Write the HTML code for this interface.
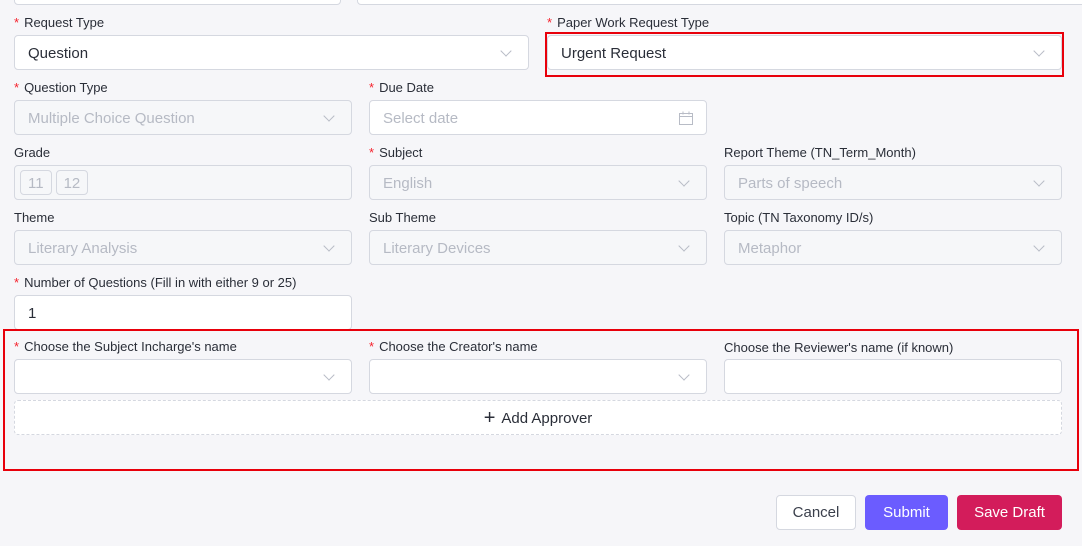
<!DOCTYPE html>
<html><head><style>
body{margin:0;width:1082px;height:546px;background:#f6f6f9;font-family:"Liberation Sans",sans-serif;position:relative;overflow:hidden;color:#1f2330}
.l{position:absolute;font-size:13px;color:#2a2e38;line-height:16px}
.l b{color:#f5222d;font-weight:normal;margin-right:5px;font-size:13px}
.i{position:absolute;box-sizing:border-box;height:35px;border:1px solid #d5d8e0;border-radius:4px;background:#fff;font-size:15px;line-height:36px;padding-left:13px;color:#2a2e38}
.d{background:#f6f7f9;color:#b6bac4}
.p{color:#b6bac4}
.c{position:absolute;right:18px;top:11px;width:7px;height:7px;border-right:1px solid #b8bcc6;border-bottom:1px solid #b8bcc6;transform:rotate(45deg)}
.tag{display:inline-block;border:1px solid #d5d8e0;border-radius:4px;height:25px;line-height:26px;padding:0 7px;margin:4px 0 0 -8px;margin-right:12px;font-size:15px;color:#b6bac4;box-sizing:border-box;vertical-align:top}
.btn{position:absolute;top:495px;height:35px;box-sizing:border-box;border-radius:4px;font-size:15px;line-height:36px;text-align:center}
</style></head><body>
<div class="i" style="left:14px;top:-30px;width:327px"></div>
<div class="i" style="left:357px;top:-30px;width:740px"></div>

<div class="l" style="left:14px;top:15px"><b>*</b>Request Type</div>
<div class="i" style="left:14px;top:35px;width:515px">Question<span class="c"></span></div>
<div class="l" style="left:547px;top:15px"><b>*</b>Paper Work Request Type</div>
<div class="i" style="left:547px;top:35px;width:515px">Urgent Request<span class="c"></span></div>
<div style="position:absolute;left:545px;top:32px;width:515px;height:41px;border:2px solid #e8000b"></div>

<div class="l" style="left:14px;top:80px"><b>*</b>Question Type</div>
<div class="i d" style="left:14px;top:100px;width:338px">Multiple Choice Question<span class="c"></span></div>
<div class="l" style="left:369px;top:80px"><b>*</b>Due Date</div>
<div class="i p" style="left:369px;top:100px;width:338px">Select date
<svg style="position:absolute;right:13px;top:10px" width="14" height="14" viewBox="0 0 14 14" fill="none" stroke="#b8bcc6"><rect x="0.5" y="2.5" width="13" height="11"/><path d="M0.5 5.5h13M4 0.5v3M10 0.5v3"/></svg></div>

<div class="l" style="left:14px;top:145px">Grade</div>
<div class="i d" style="left:14px;top:165px;width:338px"><span class="tag">11</span><span class="tag" style="margin-left:-8px">12</span></div>
<div class="l" style="left:369px;top:145px"><b>*</b>Subject</div>
<div class="i d" style="left:369px;top:165px;width:338px">English<span class="c"></span></div>
<div class="l" style="left:724px;top:145px">Report Theme (TN_Term_Month)</div>
<div class="i d" style="left:724px;top:165px;width:338px">Parts of speech<span class="c"></span></div>

<div class="l" style="left:14px;top:210px">Theme</div>
<div class="i d" style="left:14px;top:230px;width:338px">Literary Analysis<span class="c"></span></div>
<div class="l" style="left:369px;top:210px">Sub Theme</div>
<div class="i d" style="left:369px;top:230px;width:338px">Literary Devices<span class="c"></span></div>
<div class="l" style="left:724px;top:210px">Topic (TN Taxonomy ID/s)</div>
<div class="i d" style="left:724px;top:230px;width:338px">Metaphor<span class="c"></span></div>

<div class="l" style="left:14px;top:275px"><b>*</b>Number of Questions (Fill in with either 9 or 25)</div>
<div class="i" style="left:14px;top:295px;width:338px">1</div>

<div style="position:absolute;left:3px;top:329px;width:1072px;height:138px;border:2px solid #e8000b"></div>
<div class="l" style="left:14px;top:339px"><b>*</b>Choose the Subject Incharge's name</div>
<div class="i" style="left:14px;top:359px;width:338px"><span class="c"></span></div>
<div class="l" style="left:369px;top:339px"><b>*</b>Choose the Creator's name</div>
<div class="i" style="left:369px;top:359px;width:338px"><span class="c"></span></div>
<div class="l" style="left:724px;top:340px">Choose the Reviewer's name (if known)</div>
<div class="i" style="left:724px;top:359px;width:338px"></div>
<div style="position:absolute;left:14px;top:400px;width:1048px;height:35px;box-sizing:border-box;border:1px dashed #d5d8e0;border-radius:4px;background:#fff;text-align:center;font-size:15px;line-height:35px;color:#2a2e38"><span style="font-size:20px;vertical-align:-1px;margin-right:6px">+</span>Add Approver</div>

<div class="btn" style="left:776px;width:80px;background:#fff;border:1px solid #d5d8e0;color:#3a3f4b;line-height:34px">Cancel</div>
<div class="btn" style="left:865px;width:83px;background:#6b5cff;color:#fff">Submit</div>
<div class="btn" style="left:957px;width:105px;background:#d31c5b;color:#fff">Save Draft</div>
</body></html>
